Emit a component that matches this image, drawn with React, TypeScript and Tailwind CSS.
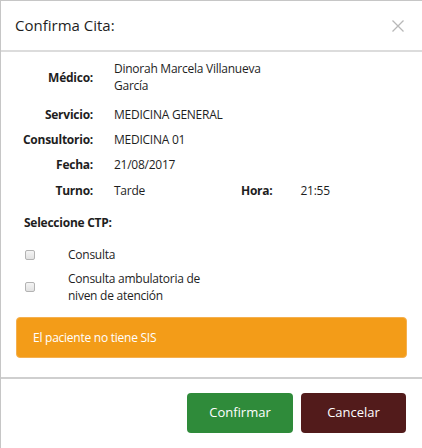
const rows = [
  { label: "Servicio:", value: "MEDICINA GENERAL" },
  { label: "Consultorio:", value: "MEDICINA 01" },
  { label: "Fecha:", value: "21/08/2017" },
];

function Box() {
  return (
    <span className="block w-[10px] h-[10px] rounded-[2px] border border-[#b3b3b3] bg-gradient-to-b from-[#f4f4f4] to-[#e2e2e2]" />
  );
}

export default function App() {
  return (
    <div className="w-[422px] h-[448px] bg-white border-l border-t border-[#c6c6c6] font-['Open_Sans',sans-serif] text-[#1e1e1e] overflow-hidden">
      {/* header */}
      <div className="h-[51px] flex items-center justify-between pl-[14px] pr-[18px] border-b-2 border-[#dcdcdc]">
        <h1 className="text-[15px] leading-none">Confirma Cita:</h1>
        <svg width="12" height="12" viewBox="0 0 12 12" className="text-[#b8b8b8]">
          <path d="M0.5 0.5 L11.5 11.5 M11.5 0.5 L0.5 11.5" stroke="currentColor" strokeWidth="1.3" />
        </svg>
      </div>

      {/* datos */}
      <div className="pt-[8px] text-[12px] leading-[17px] tracking-[-0.25px]">
        <div className="flex items-center">
          <span className="w-[92px] text-right font-bold">Médico:</span>
          <span className="ml-[21px] w-[165px]">Dinorah Marcela Villanueva García</span>
        </div>
        {rows.map((r, i) => (
          <div key={r.label} className={"flex items-center " + (i === 0 ? "mt-[12px]" : "mt-[8px]")}>
            <span className="w-[92px] text-right font-bold">{r.label}</span>
            <span className="ml-[21px]">{r.value}</span>
          </div>
        ))}
        <div className="flex items-center mt-[9px]">
          <span className="w-[92px] text-right font-bold">Turno:</span>
          <span className="ml-[21px] w-[127px]">Tarde</span>
          <span className="font-bold">Hora:</span>
          <span className="ml-[28px]">21:55</span>
        </div>

        <p className="mt-[15px] pl-[23px] font-bold">Seleccione CTP:</p>

        <label className="flex items-center mt-[15px] pl-[24px]">
          <Box />
          <span className="ml-[33px]">Consulta</span>
        </label>
        <label className="flex items-center mt-[7px] pl-[24px]">
          <Box />
          <span className="ml-[33px] w-[150px]">Consulta ambulatoria de niven de atención</span>
        </label>

        <div className="mt-[13px] ml-[15px] w-[391px] h-[41px] flex items-center pl-[16px] rounded-[4px] bg-[#f39c18] border border-[#f5b04f] text-white">
          El paciente no tiene SIS
        </div>
      </div>

      {/* footer */}
      <div className="mt-[19px] border-t-2 border-[#cfcfcf] flex justify-end gap-[8px] pt-[14px] pr-[16px] text-[13px] text-white">
        <button className="w-[106px] h-[40px] rounded-[4px] bg-[#2f8b3a]">Confirmar</button>
        <button className="w-[105px] h-[40px] rounded-[4px] bg-[#521b1b]">Cancelar</button>
      </div>
    </div>
  );
}
